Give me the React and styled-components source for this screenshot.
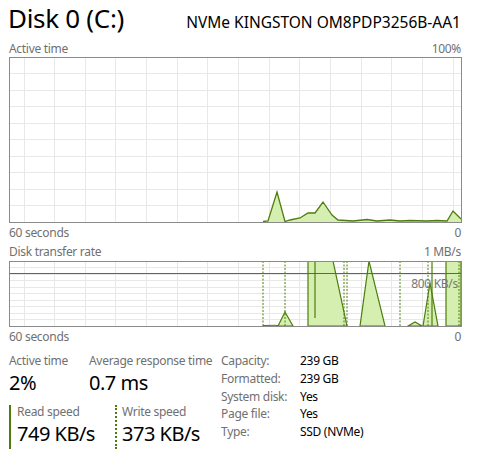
import styled, { createGlobalStyle } from "styled-components";

const GlobalStyle = createGlobalStyle`
  body {
    margin: 0;
    background: #ffffff;
    font-family: "Noto Sans", "Open Sans", sans-serif;
  }
`;

const green = "#4e7d0e";
const fill = "#d5efb0";
const gridColor = "#e8e8e8";

const Page = styled.div`
  width: 477px;
  height: 449px;
  overflow: hidden;
  padding: 0 16px 0 9px;
  box-sizing: border-box;
  white-space: nowrap;
`;

const Header = styled.div`
  display: flex;
  justify-content: space-between;
  align-items: baseline;
  height: 40px;
`;

const Title = styled.h1`
  margin: 0 0 0 -1px;
  font-size: 26px;
  font-weight: 400;
  color: #000;
  line-height: 36px;
  letter-spacing: -0.3px;
`;

const Model = styled.div`
  font-size: 15.5px;
  color: #000;
`;

const AxisRow = styled.div`
  display: flex;
  justify-content: space-between;
  font-size: 12px;
  letter-spacing: -0.3px;
  color: #707070;
  line-height: 16px;
  height: ${({ $h }) => $h}px;
  align-items: center;
`;

const ChartBox = styled.div`
  position: relative;
  width: 453px;
  height: ${({ $h }) => $h}px;
  border: 1px solid #8b8b8b;
  box-sizing: border-box;
  background: #fff;

  svg {
    display: block;
  }
`;

const ScaleTag = styled.span`
  position: absolute;
  right: 3px;
  top: 14px;
  font-size: 12px;
  letter-spacing: -0.3px;
  color: #777;
  line-height: 16px;
`;

const Stats = styled.div`
  display: flex;
  margin-top: 5px;
`;

const LeftStats = styled.div`
  display: flex;
  flex-direction: column;
  width: 212px;
`;

const StatRow = styled.div`
  display: flex;
`;

const Stat = styled.div`
  width: ${({ $w }) => $w}px;
  display: flex;
  flex-direction: column;
`;

const SpeedStat = styled.div`
  box-sizing: border-box;
  width: ${({ $w }) => $w}px;
  border-left: 2px ${({ $dashed }) => ($dashed ? "dotted" : "solid")} ${green};
  padding-left: ${({ $dashed }) => ($dashed ? 5 : 6)}px;
  margin-top: 9px;
  height: 44px;
  display: flex;
  flex-direction: column;
`;

const StatLabel = styled.span`
  font-size: 12px;
  letter-spacing: -0.3px;
  color: #707070;
  line-height: ${({ $lh }) => $lh || 17}px;
`;

const StatValue = styled.span`
  font-size: 20px;
  letter-spacing: -0.5px;
  color: #000;
  line-height: ${({ $lh }) => $lh || 27}px;
`;

const Props = styled.div`
  display: grid;
  grid-template-columns: 79px auto;
  grid-auto-rows: 17.8px;
  font-size: 12px;
  letter-spacing: -0.3px;
  line-height: 17.8px;
`;

const PropKey = styled.span`
  color: #707070;
`;

const PropVal = styled.span`
  color: #000;
`;

const vLines = Array.from({ length: 15 }, (_, k) => 24 + 30.66 * k);

function Grid({ top, bottom, step }) {
  const hs = [];
  for (let y = top + step; y < bottom - 1; y += step) hs.push(y);
  return (
    <g stroke={gridColor} strokeWidth="1" shapeRendering="crispEdges">
      {vLines.map((x) => (
        <line key={"v" + x} x1={x} y1={top} x2={x} y2={bottom} />
      ))}
      {hs.map((y) => (
        <line key={"h" + y} x1={9} y1={y} x2={461} y2={y} />
      ))}
    </g>
  );
}

const activePts =
  "263,221.5 268,221 277,192 285,221.5 290,220 300,218 308,213 315,213 323,202 332,215 338,220 353,221 367,219.5 377,221 390,220 400,221 410,220.5 427,221 437,220.5 447,221 453,211 461,219";

function ActiveChart() {
  return (
    <ChartBox $h={166}>
      <svg width="451" height="164">
        <g transform="translate(-10,-58)">
          <Grid top={57} bottom={222} step={16.5} />
          <polygon points={`263,222 ${activePts} 461,222`} fill={fill} />
          <polyline points={activePts} fill="none" stroke={green} strokeWidth="1.3" />
        </g>
      </svg>
    </ChartBox>
  );
}

const readShapes = [
  "278,326 285,312 293,326",
  "308,326 308,261 333,261 347,326",
  "360,326 369,261 385,326",
  "408,326 415,322 422,326",
  "423,326 430,283 438,326",
  "446,326 446,261 461,261 461,326",
];

const writeLines = [263, 285, 344, 347, 400, 428, 459];

function TransferChart() {
  return (
    <ChartBox $h={66}>
      <svg width="451" height="64">
        <g transform="translate(-10,-262)">
          <Grid top={261} bottom={326} step={6.5} />
          {readShapes.map((p) => (
            <polygon key={p} points={p} fill={fill} stroke={green} strokeWidth="1.2" />
          ))}
          <line x1="315" y1="261" x2="315" y2="318" stroke={green} strokeWidth="1.2" />
          <line x1="432" y1="261" x2="432" y2="326" stroke={green} strokeWidth="1.2" />
          <polyline points="263,325.5 275,325.3 278,325.5" fill="none" stroke={green} strokeWidth="1" />
          {writeLines.map((x) => (
            <line
              key={x}
              x1={x}
              y1="261"
              x2={x}
              y2="326"
              stroke={green}
              strokeWidth="1"
              strokeDasharray="2 1.5"
            />
          ))}
          <line x1="9" y1="273.5" x2="461" y2="273.5" stroke={green} strokeWidth="1.2" />
        </g>
      </svg>
      <ScaleTag>800 KB/s</ScaleTag>
    </ChartBox>
  );
}

export default function App() {
  return (
    <>
      <GlobalStyle />
      <Page>
        <Header>
          <Title>Disk 0 (C:)</Title>
          <Model>NVMe KINGSTON OM8PDP3256B-AA1</Model>
        </Header>
        <AxisRow $h={17}>
          <span>Active time</span>
          <span>100%</span>
        </AxisRow>
        <ActiveChart />
        <AxisRow $h={20}>
          <span>60 seconds</span>
          <span>0</span>
        </AxisRow>
        <AxisRow $h={18}>
          <span>Disk transfer rate</span>
          <span>1 MB/s</span>
        </AxisRow>
        <TransferChart />
        <AxisRow $h={20}>
          <span>60 seconds</span>
          <span>0</span>
        </AxisRow>
        <Stats>
          <LeftStats>
            <StatRow>
              <Stat $w={80}>
                <StatLabel>Active time</StatLabel>
                <StatValue>2%</StatValue>
              </Stat>
              <Stat $w={130}>
                <StatLabel>Average response time</StatLabel>
                <StatValue>0.7 ms</StatValue>
              </Stat>
            </StatRow>
            <StatRow>
              <SpeedStat $w={106}>
                <StatLabel $lh={14}>Read speed</StatLabel>
                <StatValue $lh={30}>749 KB/s</StatValue>
              </SpeedStat>
              <SpeedStat $w={100} $dashed>
                <StatLabel $lh={14}>Write speed</StatLabel>
                <StatValue $lh={30}>373 KB/s</StatValue>
              </SpeedStat>
            </StatRow>
          </LeftStats>
          <Props>
            <PropKey>Capacity:</PropKey>
            <PropVal>239 GB</PropVal>
            <PropKey>Formatted:</PropKey>
            <PropVal>239 GB</PropVal>
            <PropKey>System disk:</PropKey>
            <PropVal>Yes</PropVal>
            <PropKey>Page file:</PropKey>
            <PropVal>Yes</PropVal>
            <PropKey>Type:</PropKey>
            <PropVal>SSD (NVMe)</PropVal>
          </Props>
        </Stats>
      </Page>
    </>
  );
}
